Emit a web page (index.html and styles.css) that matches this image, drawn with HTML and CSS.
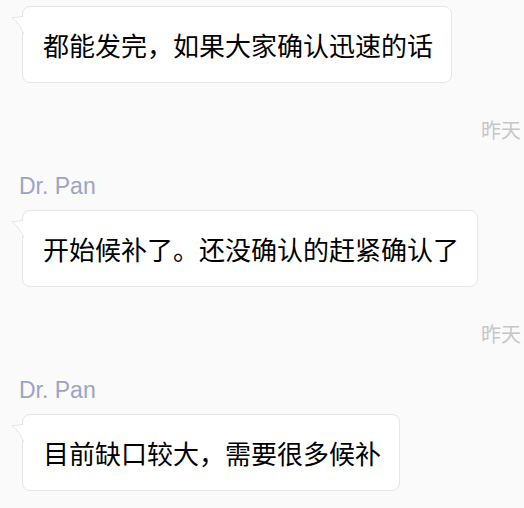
FILE: index.html
```html
<!DOCTYPE html>
<html lang="zh-CN">
<head>
<meta charset="utf-8">
<title>Chat</title>
<link rel="stylesheet" href="styles.css">
</head>
<body>
<div class="chat">
  <div class="bubble first">
    <svg class="tail" width="13" height="20" viewBox="0 0 13 20"><path class="tail-fill" d="M13 0 L13 19 C10 11 6 5 1 1.6 C5 1.6 9 1 13 0 Z"/><path class="tail-line" d="M13 18.5 C10 11 6 5 1 1.6 C5 1.6 9 1 12.5 0"/></svg>
    都能发完，如果大家确认迅速的话
  </div>
  <div class="time">昨天</div>
  <div class="name">Dr. Pan</div>
  <div class="bubble">
    <svg class="tail" width="13" height="20" viewBox="0 0 13 20"><path class="tail-fill" d="M13 0 L13 19 C10 11 6 5 1 1.6 C5 1.6 9 1 13 0 Z"/><path class="tail-line" d="M13 18.5 C10 11 6 5 1 1.6 C5 1.6 9 1 12.5 0"/></svg>
    开始候补了。还没确认的赶紧确认了
  </div>
  <div class="time">昨天</div>
  <div class="name">Dr. Pan</div>
  <div class="bubble">
    <svg class="tail" width="13" height="20" viewBox="0 0 13 20"><path class="tail-fill" d="M13 0 L13 19 C10 11 6 5 1 1.6 C5 1.6 9 1 13 0 Z"/><path class="tail-line" d="M13 18.5 C10 11 6 5 1 1.6 C5 1.6 9 1 12.5 0"/></svg>
    目前缺口较大，需要很多候补
  </div>
</div>
</body>
</html>
```

FILE: styles.css
```css
html, body {
  margin: 0;
  padding: 0;
  background: #fafafa;
}
body {
  font-family: "Noto Sans CJK SC", "Noto Sans", sans-serif;
  width: 524px;
  height: 508px;
  overflow: hidden;
}
.chat {
  display: flex;
  flex-direction: column;
  align-items: flex-start;
  padding-top: 6px;
}
.bubble {
  position: relative;
  margin-left: 22px;
  margin-top: 11px;
  background: #ffffff;
  border: 1px solid #e6e6e6;
  border-radius: 8px;
  padding: 20px 18px 20px 20px;
  font-size: 26px;
  line-height: 35px;
  color: #000000;
  white-space: nowrap;
}
.bubble.first {
  margin-top: 0;
}
.tail {
  position: absolute;
  left: -12px;
  top: 9px;
  display: block;
}
.tail-fill {
  fill: #ffffff;
}
.tail-line {
  fill: none;
  stroke: #e6e6e6;
  stroke-width: 1;
}
.time {
  align-self: stretch;
  text-align: right;
  padding-right: 3px;
  margin-top: 35px;
  font-size: 20px;
  line-height: 24px;
  color: #c6c6c6;
}
.name {
  margin-top: 31px;
  margin-left: 19px;
  font-family: "Liberation Sans", Arial, sans-serif;
  font-size: 23px;
  line-height: 26px;
  color: #9ca4c5;
}
```
